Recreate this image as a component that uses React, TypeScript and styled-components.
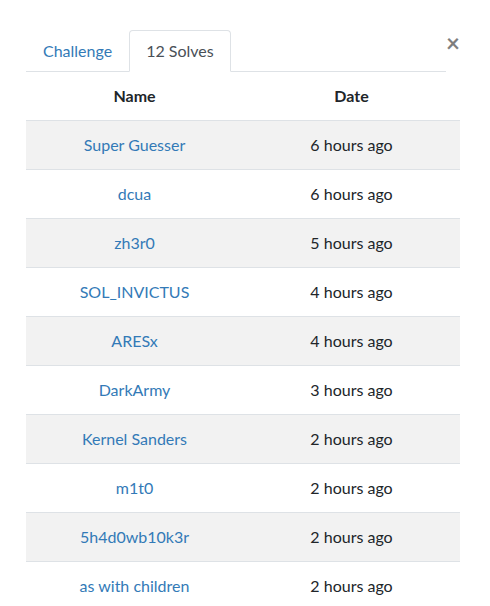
import React from "react";
import styled, { createGlobalStyle } from "styled-components";

const Global = createGlobalStyle`
  html, body { margin: 0; padding: 0; background: #fff; }
  body {
    font-family: Lato, "Open Sans", "Liberation Sans", sans-serif;
    font-size: 16px;
    line-height: 1.5;
    color: #212529;
  }
  * { box-sizing: border-box; }
`;

const Body = styled.div`
  padding: 30px 30px 0 26px;
`;

const TopBar = styled.div`
  display: flex;
  align-items: flex-start;
`;

const Tabs = styled.nav`
  flex: 1;
  display: flex;
  border-bottom: 1px solid #dee2e6;
`;

const Tab = styled.a<{ $active?: boolean }>`
  display: block;
  padding: 8px 16px;
  margin-bottom: -1px;
  border-width: 1px;
  border-style: solid;
  border-color: ${(p) => (p.$active ? "#dee2e6 #dee2e6 #fff" : "transparent")};
  border-top-left-radius: 4px;
  border-top-right-radius: 4px;
  background: ${(p) => (p.$active ? "#fff" : "transparent")};
  color: ${(p) => (p.$active ? "#495057" : "#337ab7")};
  text-decoration: none;
  cursor: pointer;
`;

const Close = styled.button`
  width: 14px;
  padding: 0;
  margin: 1px 0 0;
  border: 0;
  background: transparent;
  font-family: Lato, "Liberation Sans", sans-serif;
  font-size: 24px;
  font-weight: 700;
  line-height: 1;
  color: #000;
  opacity: 0.5;
  cursor: pointer;
  display: flex;
  justify-content: center;
`;

const Table = styled.table`
  width: 100%;
  border-collapse: collapse;
  text-align: center;
`;

const Row = styled.tr<{ $striped?: boolean }>`
  background: ${(p) => (p.$striped ? "#f2f2f2" : "transparent")};
`;

const Cell = styled.td`
  width: 50%;
  padding: 12px;
  border-top: 1px solid #dee2e6;
  vertical-align: top;
`;

const HeadCell = styled(Cell)`
  border-top: 0;
  font-weight: 700;
`;

const Link = styled.a`
  color: #337ab7;
  text-decoration: none;
`;

const solves = [
  ["Super Guesser", "6 hours ago"],
  ["dcua", "6 hours ago"],
  ["zh3r0", "5 hours ago"],
  ["SOL_INVICTUS", "4 hours ago"],
  ["ARESx", "4 hours ago"],
  ["DarkArmy", "3 hours ago"],
  ["Kernel Sanders", "2 hours ago"],
  ["m1t0", "2 hours ago"],
  ["5h4d0wb10k3r", "2 hours ago"],
  ["as with children", "2 hours ago"],
];

export default function App() {
  return (
    <>
      <Global />
      <Body>
        <TopBar>
          <Tabs>
            <Tab>Challenge</Tab>
            <Tab $active>12 Solves</Tab>
          </Tabs>
          <Close aria-label="Close">×</Close>
        </TopBar>
        <Table>
          <thead>
            <tr>
              <HeadCell>Name</HeadCell>
              <HeadCell>Date</HeadCell>
            </tr>
          </thead>
          <tbody>
            {solves.map(([name, date], i) => (
              <Row key={name} $striped={i % 2 === 0}>
                <Cell>
                  <Link>{name}</Link>
                </Cell>
                <Cell>{date}</Cell>
              </Row>
            ))}
          </tbody>
        </Table>
      </Body>
    </>
  );
}
